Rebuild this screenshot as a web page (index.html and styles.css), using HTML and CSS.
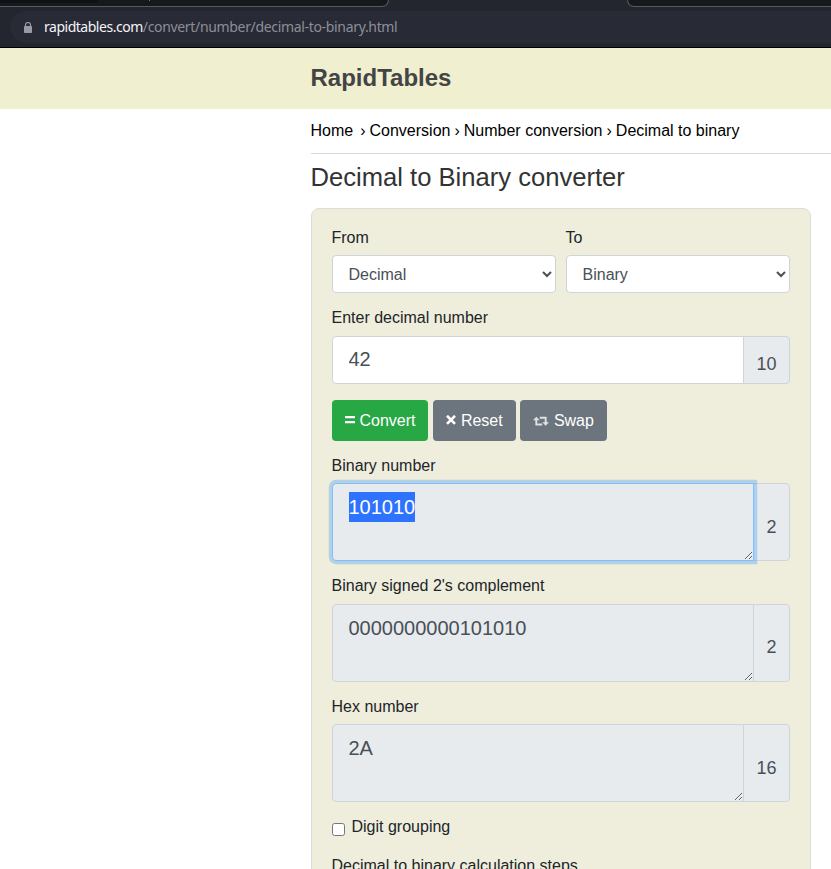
FILE: index.html
```html
<!DOCTYPE html>
<html lang="en">
<head>
<meta charset="utf-8">
<title>Decimal to Binary converter</title>
<link rel="stylesheet" href="styles.css">
</head>
<body>
<div class="browser">
  <div class="tabs"><div class="tab tab-left"><i class="tab-shade"></i><i class="tab-speck"></i></div><div class="tab tab-right"></div></div>
  <div class="address">
    <svg class="lock" width="8" height="11" viewBox="0 0 8 11"><path d="M1.5 5V3a2.5 2.5 0 0 1 5 0v2" fill="none" stroke="#999ba3" stroke-width="1.2"/><rect y="4" width="8" height="7" rx=".7" fill="#999ba3"/></svg>
    <span class="url"><b>rapidtables.com</b>/convert/number/decimal-to-binary.html</span>
  </div>
</div>
<header class="site-header"><a class="brand">RapidTables</a></header>
<main class="content">
  <nav class="crumbs"><a class="home">Home</a><span class="sep">›</span><a>Conversion</a><span class="sep">›</span><a>Number conversion</a><span class="sep">›</span><a>Decimal to binary</a></nav>
  <h1>Decimal to Binary converter</h1>
  <form class="card">
    <div class="row">
      <div class="group"><label for="from">From</label><select id="from" class="control"><option>Decimal</option></select></div>
      <div class="group"><label for="to">To</label><select id="to" class="control"><option>Binary</option></select></div>
    </div>
    <div class="group entry"><label for="x">Enter decimal number</label>
      <div class="input-group"><input id="x" class="control large" type="text" value="42"><span class="addon">10</span></div></div>
    <div class="buttons">
      <button type="button" class="btn convert"><svg width="10" height="10" viewBox="0 0 10 10"><path d="M0 2.2h10M0 7.2h10" stroke="#fff" stroke-width="2.3"/></svg><span>Convert</span></button>
      <button type="button" class="btn reset"><svg width="10" height="10" viewBox="0 0 10 10"><path d="M1 .8l8 8M9 .8l-8 8" stroke="#fff" stroke-width="2.6"/></svg><span>Reset</span></button>
      <button type="button" class="btn swap"><svg width="16" height="10" viewBox="0 0 16 10"><path d="M3.3 2.2v6.3h5.9M6.8 1.8h5.9v6" fill="none" stroke="#dee0e2" stroke-width="1.9"/><path d="M0 4.2L3.3.8l3.4 3.4zM9.3 6.2H16l-3.3 3.6z" fill="#dee0e2"/></svg><span>Swap</span></button>
    </div>
    <div class="group"><label>Binary number</label>
      <div class="input-group"><div class="control large area focused" tabindex="0"><span class="selected">101010</span></div><span class="addon">2</span></div></div>
    <div class="group"><label for="y2">Binary signed 2's complement</label>
      <div class="input-group"><textarea id="y2" class="control large area" readonly>0000000000101010</textarea><span class="addon">2</span></div></div>
    <div class="group"><label for="y3">Hex number</label>
      <div class="input-group"><textarea id="y3" class="control large area" readonly>2A</textarea><span class="addon">16</span></div></div>
    <div class="check"><input id="grouping" type="checkbox"><label for="grouping">Digit grouping</label></div>
    <label>Decimal to binary calculation steps</label>
  </form>
</main>
</body>
</html>
```
FILE: styles.css
```css
* { box-sizing: border-box; }
html, body { height: 100%; }
body { margin: 0; overflow: hidden; background: #fff; color: #212529; font: 16px/24px "Liberation Sans", Arial, sans-serif; }
.browser { height: 48px; background: #23252f; border-bottom: 1px solid #000; }
.tabs { display: flex; justify-content: space-between; height: 11px; }
.tab { position: relative; overflow: hidden; height: 7px; background: #17181c; border-bottom: 1px solid #595a60; }
.tab-left { width: 389px; border-right: 1px solid #595a60; border-radius: 0 0 7px 0; }
.tab-right { width: 204px; border-left: 1px solid #595a60; border-radius: 0 0 0 7px; }
.tab-shade { position: absolute; left: 0; top: 0; width: 98px; height: 3px; background: #101115; }
.tab-speck { position: absolute; left: 149px; top: 0; width: 1px; height: 1px; background: #777; }
.address { display: flex; align-items: center; height: 32px; margin-left: 10px; padding-left: 14px; border-radius: 16px 0 0 16px; background: #282a36; }
.lock { flex: none; margin-right: 12px; }
.url { color: #8d8f98; font: 14px/20px "Noto Sans", sans-serif; letter-spacing: -.33px; }
.url b { color: #f4f4f6; font-weight: 400; letter-spacing: -.48px; }
.site-header { height: 61px; padding: 15px 0 0 310.5px; background: #f0efd0; }
.brand { display: block; color: #444; font-size: 24px; font-weight: 700; line-height: 29px; }
.content { padding-left: 310.5px; }
.crumbs { display: flex; height: 45px; padding-top: 10px; border-bottom: 1px solid #d8d8da; color: #000; }
.crumbs .home { margin-right: 3px; }
.sep { margin: 0 4px; }
h1 { height: 54px; margin: 0; padding-top: 6px; color: #333; font-size: 25.6px; font-weight: 400; line-height: 34px; }
.card { width: 500px; height: 700px; padding: 17px 20px; border: 1px solid #dcdddb; border-radius: 8px; background: #efeedc; }
label { display: block; height: 24px; }
.group { margin-bottom: 13px; }
.group label { margin-bottom: 5.4px; }
.row { display: flex; gap: 10px; }
.row .group { flex: 1; }
.row .group label { margin-bottom: 5px; }
.group.entry { margin-bottom: 16px; }
.entry label { margin-bottom: 6px; }
.control { display: block; width: 100%; min-width: 0; height: 38px; margin: 0; padding: 6px 16px; border: 1px solid #ced4da; border-radius: 4px; background: #fff; color: #495057; font: inherit; outline: 0; }
select.control { padding-left: 12px; padding-right: 0; }
.input-group { display: flex; }
.large { flex: 1; height: 48px; border-radius: 4px 0 0 4px; font-size: 20px; line-height: 30px; padding: 8px 16px; }
.entry .large { padding: 7px 16px 9px; }
.area { height: 78px; resize: vertical; overflow: auto; background: #e7ebee; }
.focused { border-color: #80bdff; box-shadow: 0 0 0 3.2px rgba(0, 123, 255, .25); z-index: 1; }
.selected { display: inline-block; background: #2d73ff; color: #fff; }
.addon { display: flex; align-items: center; margin-left: -1px; padding: 9px 12px 0 12.5px; border: 1px solid #ced4da; border-radius: 0 4px 4px 0; background: #e7ebee; color: #495057; font-size: 18px; }
.entry .addon { padding-top: 8px; }
.buttons { display: flex; margin-bottom: 13px; }
.btn { display: flex; align-items: center; height: 41px; gap: 5px; padding: 0 0 0 13.4px; border: 0; border-radius: 4px; background: #6c757d; color: #fff; font: inherit; }
.btn svg { flex: none; margin-top: -2px; }
.btn.swap svg { margin-top: 0; }
.convert { width: 96px; margin-right: 5px; background: #28a745; }
.convert { padding-left: 13px; }
.reset { width: 83px; margin-right: 4px; }
.swap { width: 87px; }
.check { display: flex; margin-bottom: 14.5px; }
.check input { width: 13px; height: 13px; margin: 8px 7px 0 0; }
```
